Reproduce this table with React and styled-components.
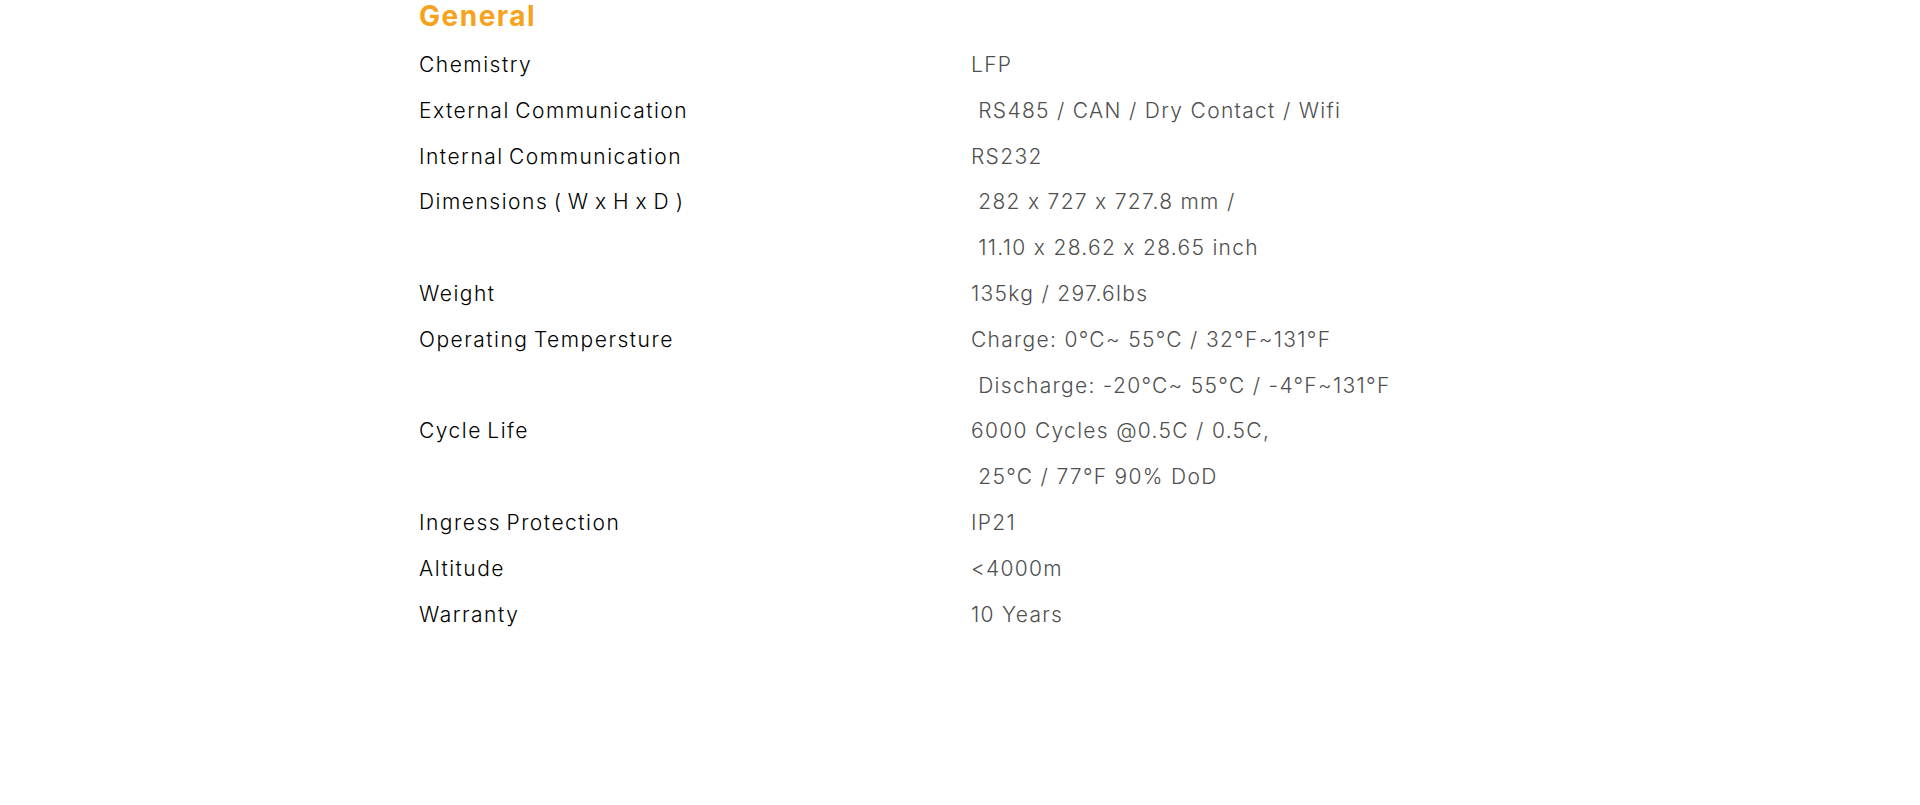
import React from "react";
import styled, { createGlobalStyle } from "styled-components";

const Global = createGlobalStyle`
  html, body { margin: 0; padding: 0; background: #ffffff; }
  body {
    font-family: "Inter", "Noto Sans", sans-serif;
    font-feature-settings: "calt" 0;
  }
`;

const Page = styled.main`
  width: 1082px;
  margin: 0 auto;
`;

const Heading = styled.h2`
  margin: 0 0 10px 0;
  font-size: 28px;
  line-height: 32px;
  font-weight: 700;
  letter-spacing: 1.5px;
  color: #f7a21d;
`;

const SpecList = styled.dl`
  margin: 0;
  display: grid;
  grid-template-columns: 552px 1fr;
`;

const Label = styled.dt`
  margin: 0;
  font-size: 21px;
  line-height: 45.8px;
  font-weight: 300;
  letter-spacing: 1.5px;
  word-spacing: -2px;
  color: #000000;
`;

const Value = styled.dd`
  margin: 0;
  display: flex;
  flex-direction: column;
`;

const Line = styled.span`
  font-size: 21px;
  line-height: 45.8px;
  font-weight: 300;
  letter-spacing: 1.3px;
  color: #4f4f4f;
  white-space: pre;
`;

const specs = [
  { label: "Chemistry", lines: ["LFP"] },
  { label: "External Communication", lines: [" RS485 / CAN / Dry Contact / Wifi"] },
  { label: "Internal Communication", lines: ["RS232"] },
  { label: "Dimensions ( W x H x D )", lines: [" 282 x 727 x 727.8 mm /", " 11.10 x 28.62 x 28.65 inch"] },
  { label: "Weight", lines: ["135kg / 297.6lbs"] },
  { label: "Operating Tempersture", lines: ["Charge: 0°C~ 55°C / 32°F~131°F", " Discharge: -20°C~ 55°C / -4°F~131°F"] },
  { label: "Cycle Life", lines: ["6000 Cycles @0.5C / 0.5C,", " 25°C / 77°F 90% DoD"] },
  { label: "Ingress Protection", lines: ["IP21"] },
  { label: "Altitude", lines: ["<4000m"] },
  { label: "Warranty", lines: ["10 Years"] },
];

export default function App() {
  return (
    <>
      <Global />
      <Page>
        <Heading>General</Heading>
        <SpecList>
          {specs.map((s) => (
            <React.Fragment key={s.label}>
              <Label>{s.label}</Label>
              <Value>
                {s.lines.map((l, i) => (
                  <Line key={i}>{l}</Line>
                ))}
              </Value>
            </React.Fragment>
          ))}
        </SpecList>
      </Page>
    </>
  );
}
